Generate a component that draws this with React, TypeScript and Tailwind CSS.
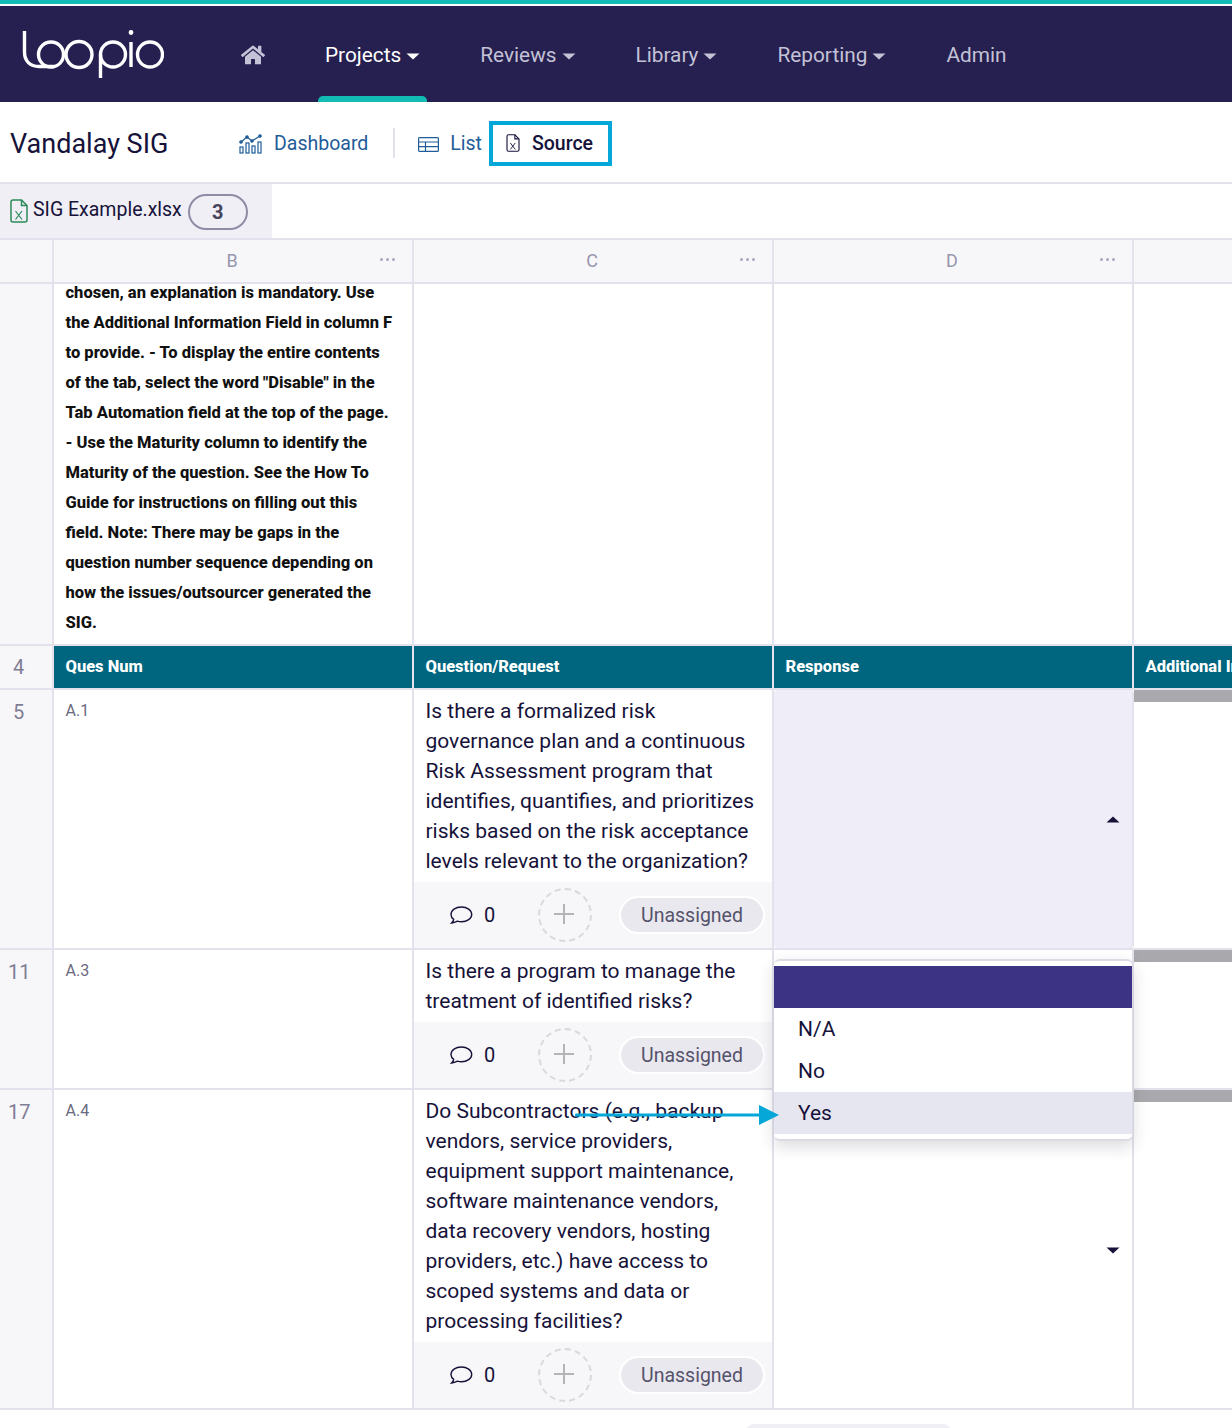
import { FaHome } from "react-icons/fa";

const SIDE_NOTE = [
  "chosen, an explanation is mandatory. Use",
  "the Additional Information Field in column F",
  "to provide. - To display the entire contents",
  "of the tab, select the word \"Disable\" in the",
  "Tab Automation field at the top of the page.",
  "- Use the Maturity column to identify the",
  "Maturity of the question. See the How To",
  "Guide for instructions on filling out this",
  "field. Note: There may be gaps in the",
  "question number sequence depending on",
  "how the issues/outsourcer generated the",
  "SIG.",
];

const QUESTIONS = [
  {
    row: "5",
    num: "A.1",
    height: "h-[260px]",
    active: true,
    lines: [
      "Is there a formalized risk",
      "governance plan and a continuous",
      "Risk Assessment program that",
      "identifies, quantifies, and prioritizes",
      "risks based on the risk acceptance",
      "levels relevant to the organization?",
    ],
  },
  {
    row: "11",
    num: "A.3",
    height: "h-[140px]",
    active: false,
    lines: ["Is there a program to manage the", "treatment of identified risks?"],
  },
  {
    row: "17",
    num: "A.4",
    height: "h-[320px]",
    active: false,
    lines: [
      "Do Subcontractors (e.g., backup",
      "vendors, service providers,",
      "equipment support maintenance,",
      "software maintenance vendors,",
      "data recovery vendors, hosting",
      "providers, etc.) have access to",
      "scoped systems and data or",
      "processing facilities?",
    ],
  },
];

function Caret({ up, className }: { up?: boolean; className?: string }) {
  return (
    <svg width="14" height="7" viewBox="0 0 14 7" className={className} fill="currentColor">
      <path d={up ? "M7 0.5 L13.5 6.5 L0.5 6.5 Z" : "M0.5 0.5 L13.5 0.5 L7 6.5 Z"} />
    </svg>
  );
}

function Logo() {
  return (
    <svg width="144" height="52" viewBox="0 0 144 52" fill="none" stroke="#fff" strokeWidth="3.4" className="block">
      <path d="M4.5 3 V24 C4.5 33 10 38.5 19 38.5 H34" />
      <circle cx="31" cy="26.5" r="12.5" />
      <circle cx="59" cy="26.5" r="13" />
      <circle cx="93" cy="26.5" r="12.5" />
      <path d="M80.5 26.5 V50" />
      <path d="M111 14 V39" />
      <circle cx="111" cy="4.5" r="1.7" fill="#fff" strokeWidth="1.4" />
      <circle cx="130" cy="26.5" r="12.5" />
    </svg>
  );
}

function NavItem({ label, active, caret }: { label: string; active?: boolean; caret?: boolean }) {
  return (
    <div className={`flex items-center gap-[5px] text-[20.8px] ${active ? "text-white" : "text-[#c4c2d6]"}`}>
      <span>{label}</span>
      {caret && <Caret className="mt-px" />}
    </div>
  );
}

function ChartIcon() {
  return (
    <svg width="24" height="20" viewBox="0 0 24 20" fill="none" stroke="#1f5c99" strokeWidth="1.2">
      <path d="M2 8 L8 3 L13 7 L21 2" />
      <circle cx="2" cy="8" r="1.2" fill="#1f5c99" />
      <circle cx="8" cy="3" r="1.2" fill="#1f5c99" />
      <circle cx="13" cy="7" r="1.2" fill="#1f5c99" />
      <circle cx="21" cy="2" r="1.2" fill="#1f5c99" />
      <rect x="1" y="13" width="3" height="6" />
      <rect x="7" y="9" width="3" height="10" />
      <rect x="13" y="12" width="3" height="7" />
      <rect x="19" y="8" width="3" height="11" />
    </svg>
  );
}

function TableIcon() {
  return (
    <svg width="21" height="15" viewBox="0 0 21 15" fill="none" stroke="#1f5c99" strokeWidth="1.2">
      <rect x="0.6" y="0.6" width="19.8" height="13.8" rx="1" />
      <path d="M0.6 5 H20.4 M0.6 9.7 H20.4 M7.5 5 V14.4" />
    </svg>
  );
}

function SheetIcon({ color, className }: { color: string; className?: string }) {
  return (
    <svg width="18" height="24" viewBox="0 0 18 24" fill="none" stroke={color} strokeWidth="1.5" className={className}>
      <path d="M1 3 Q1 1 3 1 H11.5 L17 6.5 V21 Q17 23 15 23 H3 Q1 23 1 21 Z" />
      <path d="M11.5 1 V6.5 H17" />
      <path d="M5.5 12 L12 20.5 M12 12 L5.5 20.5" strokeWidth="1.2" />
    </svg>
  );
}

function ColumnHeader({ label }: { label: string }) {
  return (
    <div className="relative flex w-[360px] shrink-0 items-center justify-center border-r-2 border-[#e3e2ec] pb-[2px] pr-[2px] text-[18px] text-[#9896ad]">
      {label}
      <span className="absolute right-[17px] top-[18px] flex gap-[3px]">
        <i className="h-[3px] w-[3px] rounded-full bg-[#a9a7bb]" />
        <i className="h-[3px] w-[3px] rounded-full bg-[#a9a7bb]" />
        <i className="h-[3px] w-[3px] rounded-full bg-[#a9a7bb]" />
      </span>
    </div>
  );
}

function QuestionFooter() {
  return (
    <div className="flex h-[66px] items-center bg-[#f7f7fa]">
      <svg width="24" height="20" viewBox="0 0 24 20" fill="none" stroke="#16123a" strokeWidth="1.4" className="ml-[35px]">
        <path d="M12.5 2 C6.5 2 2 5.2 2 9.4 C2 11.4 3 13.1 4.7 14.4 C4.6 15.6 3.7 17 2.6 18 C5 17.9 7 17 8.5 16.2 C9.7 16.6 11 16.8 12.5 16.8 C18 16.8 22.7 13.6 22.7 9.4 C22.7 5.2 18 2 12.5 2 Z" />
      </svg>
      <span className="ml-[11px] w-[54px] text-[20px] text-[#16123a]">0</span>
      <div className="flex h-[54px] w-[54px] items-center justify-center rounded-full border-2 border-dashed border-[#d9d9dc] pb-[2px] pr-[2px]">
        <svg width="22" height="22" viewBox="0 0 22 22" stroke="#b4b4b8" strokeWidth="2">
          <path d="M11 1 V21 M1 11 H21" />
        </svg>
      </div>
      <div className="ml-[29px] flex h-[34px] w-[142px] items-center justify-center rounded-full bg-[#e9e8ee] pt-[2px] text-[19.5px] text-[#55536b] outline-2 outline-white">
        Unassigned
      </div>
    </div>
  );
}

export default function App() {
  return (
    <div className="relative h-[1428px] w-[1232px] overflow-hidden bg-white font-['Roboto',sans-serif] text-[#16123a]">
      <div className="h-[4px] bg-[#12bcb5]" />
      <nav className="mt-[2px] flex h-[96px] items-center bg-[#252050]">
        <div className="ml-[20px] w-[144px]">
          <Logo />
        </div>
        <FaHome className="ml-[77px] mt-[2px] text-[#c4c2d6]" size={24} />
        <div className="ml-[60px] mt-[4px] flex items-center gap-[60px]">
          <div className="relative">
            <NavItem label="Projects" caret active />
            <div className="absolute -bottom-[30px] -left-[7px] -right-[7px] h-[6px] rounded-t-[5px] bg-[#12bcb5]" />
          </div>
          <NavItem label="Reviews" caret />
          <NavItem label="Library" caret />
          <NavItem label="Reporting" caret />
          <NavItem label="Admin" />
        </div>
      </nav>

      <header className="flex h-[82px] items-center border-b-2 border-[#e3e2ec] pt-[2px]">
        <h1 className="ml-[10px] w-[229px] pt-[2px] text-[27px] font-normal">Vandalay SIG</h1>
        <div className="mt-[2px] flex items-center gap-[11px] text-[19.5px] text-[#1f5c99]">
          <ChartIcon />
          <span>Dashboard</span>
        </div>
        <div className="ml-[25px] h-[30px] w-[2px] bg-[#e3e2ec]" />
        <div className="ml-[23px] mt-[2px] flex items-center gap-[11px] text-[19.5px] text-[#1f5c99]">
          <TableIcon />
          <span>List</span>
        </div>
        <div className="ml-[7px] flex h-[45px] w-[123px] items-center border-4 border-[#04a7d8] pl-[13px] text-[19.5px] font-medium">
          <SheetIcon color="#16123a" className="h-[18px] w-[14px]" />
          <span className="ml-[12px] mt-[2px]">Source</span>
        </div>
      </header>

      <div className="flex h-[56px] border-b-2 border-[#e3e2ec]">
        <div className="flex w-[272px] items-center bg-[#f0eff5] pl-[10px]">
          <SheetIcon color="#2b8a5a" />
          <span className="ml-[5px] mt-[-3px] text-[19.5px]">SIG Example.xlsx</span>
          <div className="ml-[6px] mt-[2px] flex h-[36px] w-[60px] items-center justify-center rounded-full border-2 border-[#8f8da6] text-[20px] font-bold text-[#46445c]">
            3
          </div>
        </div>
      </div>

      <div className="flex h-[44px] border-b-2 border-[#e3e2ec] bg-[#f7f7fa]">
        <div className="w-[54px] shrink-0 border-r-2 border-[#e3e2ec]" />
        <ColumnHeader label="B" />
        <ColumnHeader label="C" />
        <ColumnHeader label="D" />
      </div>

      <div className="flex h-[362px] border-b-2 border-[#e3e2ec]">
        <div className="w-[54px] shrink-0 border-r-2 border-[#e3e2ec] bg-[#f7f7fa]" />
        <div className="w-[360px] shrink-0 overflow-hidden border-r-2 border-[#e3e2ec] pl-[11.5px] text-[16.55px] font-extrabold leading-[30px] text-[#111]">
          <div className="-mt-[6px]">
            {SIDE_NOTE.map((line) => (
              <div key={line} className="whitespace-nowrap">
                {line}
              </div>
            ))}
          </div>
        </div>
        <div className="w-[360px] shrink-0 border-r-2 border-[#e3e2ec]" />
        <div className="w-[360px] shrink-0 border-r-2 border-[#e3e2ec]" />
      </div>

      <div className="flex h-[44px] border-b-2 border-[#e3e2ec]">
        <div className="flex w-[54px] shrink-0 items-center border-r-2 border-[#e3e2ec] bg-[#f7f7fa] pl-[13px] text-[20px] text-[#7f7d94]">
          4
        </div>
        {["Ques Num", "Question/Request", "Response"].map((h) => (
          <div
            key={h}
            className="flex w-[360px] shrink-0 items-center border-r-2 border-[#e3e2ec] bg-[#006680] pl-[11.5px] text-[16.5px] font-extrabold text-white"
          >
            {h}
          </div>
        ))}
        <div className="flex flex-1 items-center overflow-hidden whitespace-nowrap bg-[#006680] pl-[11.5px] text-[16.5px] font-extrabold text-white">
          Additional Information
        </div>
      </div>

      {QUESTIONS.map((q) => (
        <div key={q.row} className={`flex ${q.height} border-b-2 border-[#e3e2ec]`}>
          <div className="w-[54px] shrink-0 border-r-2 border-[#e3e2ec] bg-[#f7f7fa] pl-[8px] pt-[10px] text-[20px] leading-[24px] text-[#7f7d94]">
            <span className={q.row.length === 1 ? "ml-[5px]" : ""}>{q.row}</span>
          </div>
          <div className="w-[360px] shrink-0 border-r-2 border-[#e3e2ec] pl-[11.5px] pt-[11px] text-[16px] leading-[20px] text-[#6b6980]">
            {q.num}
          </div>
          <div className="flex w-[360px] shrink-0 flex-col border-r-2 border-[#e3e2ec]">
            <div className="flex-1 pl-[11.5px] pt-[6px] text-[21px] leading-[30px]">
              {q.lines.map((line) => (
                <div key={line} className="whitespace-nowrap">
                  {line}
                </div>
              ))}
            </div>
            <QuestionFooter />
          </div>
          <div
            className={`relative w-[360px] shrink-0 border-r-2 border-[#e3e2ec] ${q.active ? "rounded-[4px] bg-[#efedf7]" : ""}`}
          >
            {q.active && <Caret up className="absolute right-[12px] top-[126px]" />}
            {q.row === "17" && <Caret className="absolute right-[12px] top-[157px]" />}
          </div>
          <div className="flex-1">
            <div className="h-[12px] bg-[#a9a9ad]" />
          </div>
        </div>
      ))}

      <div className="absolute left-[746px] top-[1424px] h-[8px] w-[205px] rounded-t-[8px] bg-[#f0eff5]" />

      {/* open response dropdown */}
      <div className="absolute left-[774px] top-[959px] h-[182px] w-[359px] overflow-hidden rounded-[6px] border border-t-2 border-b-2 border-[#dcdbe3] border-l-0 bg-white pt-[5px] text-[21px] shadow-[0_6px_16px_rgba(40,40,60,0.16)]">
        <div className="h-[42px] bg-[#3d3385]" />
        <div className="flex h-[42px] items-center pl-[24px] pt-[2px]">N/A</div>
        <div className="flex h-[42px] items-center pl-[24px] pt-[2px]">No</div>
        <div className="flex h-[42px] items-center bg-[#e6e6f1] pl-[24px] pt-[2px]">Yes</div>
      </div>

      {/* annotation arrow pointing at Yes */}
      <svg width="206" height="24" viewBox="0 0 206 24" className="absolute left-[575px] top-[1104px]" fill="#04a7d8">
        <rect x="0" y="9.5" width="186" height="3" rx="1" />
        <path d="M184 1 L204 11 L184 21 Z" />
      </svg>
    </div>
  );
}
